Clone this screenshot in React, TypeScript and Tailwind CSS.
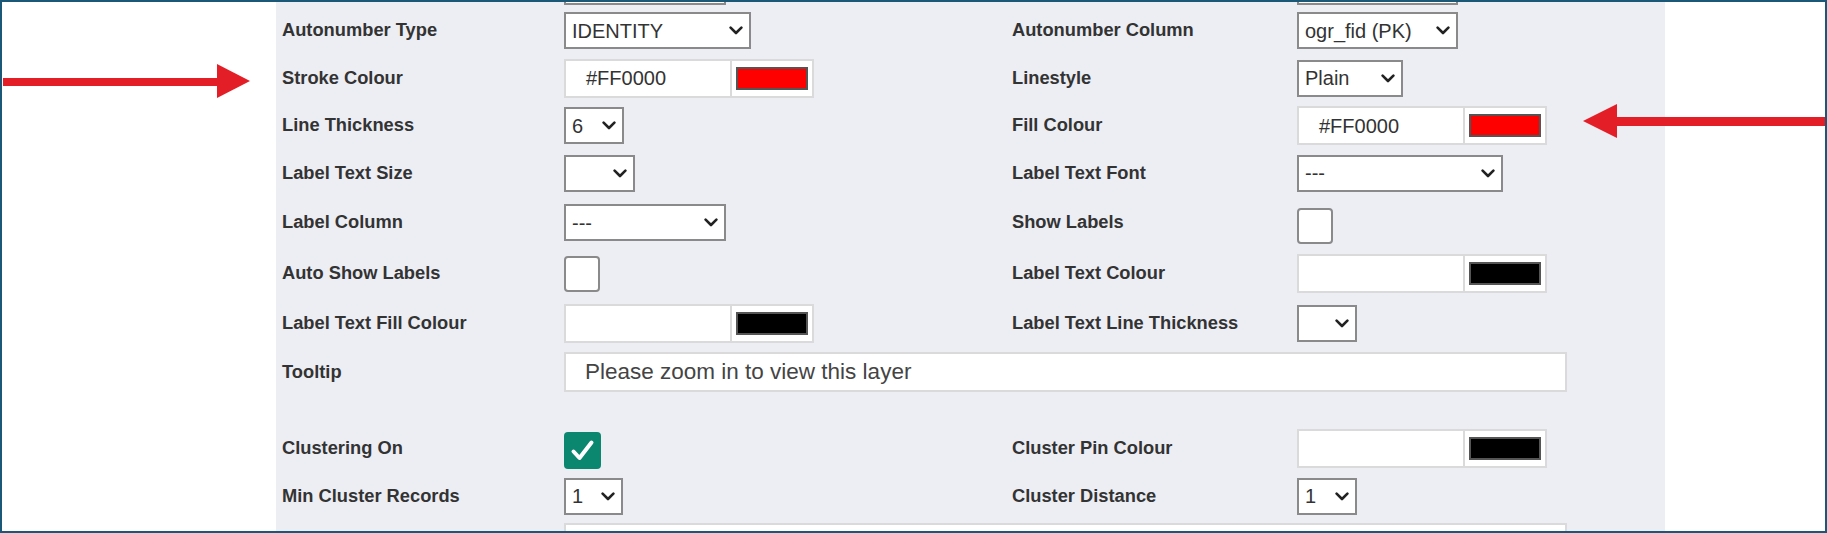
import React from "react";

const Chevron = () => (
  <svg width="14" height="9" viewBox="0 0 14 9" className="shrink-0">
    <polyline
      points="1.6,1.6 7,7 12.4,1.6"
      fill="none"
      stroke="#222"
      strokeWidth="2.6"
      strokeLinecap="round"
      strokeLinejoin="round"
    />
  </svg>
);

function Select({ w, value }: { w: string; value?: string }) {
  return (
    <div
      className={`${w} flex h-[37px] items-center justify-between border-2 border-[#8a8a8a] bg-white pl-[6px] pr-[6px] text-[20px] leading-none text-[#333]`}
    >
      <span>{value ?? ""}</span>
      <Chevron />
    </div>
  );
}

function Colour({ value, swatch }: { value?: string; swatch: string }) {
  return (
    <div className="flex h-[39px] w-[250px]">
      <div className="flex h-full w-[168px] items-center border-2 border-[#dadada] bg-white pl-[20px] text-[20px] leading-none text-[#333]">
        {value ?? ""}
      </div>
      <div className="flex h-full w-[82px] items-center justify-center border-2 border-l-0 border-[#dadada] bg-white">
        <div className={`h-[23px] w-[72px] border-2 border-[#555] ${swatch}`} />
      </div>
    </div>
  );
}

const Checkbox = () => (
  <div className="h-[36px] w-[36px] rounded-[4px] border-2 border-[#8a8a8a] bg-white" />
);

const CheckedBox = () => (
  <div className="flex h-[37px] w-[37px] items-center justify-center rounded-[4px] bg-[#0b8770]">
    <svg width="37" height="37" viewBox="0 0 37 37">
      <path
        d="M9.5 19.5 L15.5 26 L27.5 10.5"
        fill="none"
        stroke="#fff"
        strokeWidth="4"
        strokeLinecap="round"
        strokeLinejoin="round"
      />
    </svg>
  </div>
);

const Label = ({ children }: { children: React.ReactNode }) => (
  <div className="whitespace-nowrap text-[18.3px] font-bold leading-none text-[#333]">{children}</div>
);

function Row({ h, children }: { h: string; children: React.ReactNode }) {
  return (
    <div className={`grid shrink-0 grid-cols-[282px_448px_285px_1fr] items-center ${h}`}>{children}</div>
  );
}

export default function App() {
  return (
    <div className="relative h-[533px] w-[1827px] overflow-hidden border-2 border-[#1b5877] bg-white font-['Liberation_Sans',Arial,sans-serif]">
      <div className="flex h-full w-full">
        <div className="h-full w-[274px] shrink-0 bg-white" />
        <div className="flex h-full w-[1389px] shrink-0 flex-col overflow-hidden bg-[#eceef3] pl-[6px]">
          {/* partially visible previous row */}
          <div className="grid h-[5px] shrink-0 grid-cols-[282px_448px_285px_1fr] items-start">
            <div />
            <div className="h-[3px] w-[162px] border-x-2 border-b-2 border-[#8a8a8a] bg-white" />
            <div />
            <div className="h-[3px] w-[161px] border-x-2 border-b-2 border-[#8a8a8a] bg-white" />
          </div>

          <Row h="h-[47px]">
            <Label>Autonumber Type</Label>
            <Select w="w-[187px]" value="IDENTITY" />
            <Label>Autonumber Column</Label>
            <Select w="w-[161px]" value="ogr_fid (PK)" />
          </Row>

          <Row h="h-[48px]">
            <Label>Stroke Colour</Label>
            <Colour value="#FF0000" swatch="bg-[#ff0000]" />
            <Label>Linestyle</Label>
            <Select w="w-[106px]" value="Plain" />
          </Row>

          <Row h="h-[47px]">
            <Label>Line Thickness</Label>
            <Select w="w-[60px]" value="6" />
            <Label>Fill Colour</Label>
            <Colour value="#FF0000" swatch="bg-[#ff0000]" />
          </Row>

          <Row h="h-[48px]">
            <Label>Label Text Size</Label>
            <Select w="w-[71px]" />
            <Label>Label Text Font</Label>
            <Select w="w-[206px]" value="---" />
          </Row>

          <Row h="h-[51px]">
            <Label>Label Column</Label>
            <Select w="w-[162px]" value="---" />
            <Label>Show Labels</Label>
            <div className="mt-[6px]">
              <Checkbox />
            </div>
          </Row>

          <Row h="h-[50px]">
            <Label>Auto Show Labels</Label>
            <div className="mt-[2px]">
              <Checkbox />
            </div>
            <Label>Label Text Colour</Label>
            <Colour swatch="bg-black" />
          </Row>

          <Row h="h-[50px]">
            <Label>Label Text Fill Colour</Label>
            <Colour swatch="bg-black" />
            <Label>Label Text Line Thickness</Label>
            <Select w="w-[60px]" />
          </Row>

          <Row h="h-[48px]">
            <Label>Tooltip</Label>
            <div className="col-span-3 flex h-[40px] w-[1003px] items-center border-2 border-[#dadada] bg-white pl-[19px] text-[22.5px] leading-none text-[#444]">
              Please zoom in to view this layer
            </div>
          </Row>

          <div className="h-[28px] shrink-0" />

          <Row h="h-[48px]">
            <Label>Clustering On</Label>
            <div className="mt-[5px]">
              <CheckedBox />
            </div>
            <Label>Cluster Pin Colour</Label>
            <Colour swatch="bg-black" />
          </Row>

          <Row h="h-[48px]">
            <Label>Min Cluster Records</Label>
            <Select w="w-[59px]" value="1" />
            <Label>Cluster Distance</Label>
            <Select w="w-[60px]" value="1" />
          </Row>

          <div className="grid shrink-0 grid-cols-[282px_448px_285px_1fr] pt-[3px]">
            <div />
            <div className="col-span-3 h-[40px] w-[1003px] border-2 border-[#dadada] bg-white" />
          </div>
        </div>
        <div className="h-full flex-1 bg-white" />
      </div>

      {/* annotation arrows */}
      <svg className="absolute left-[1px] top-[62px]" width="250" height="34" viewBox="0 0 250 34">
        <rect x="0" y="14" width="216" height="8" fill="#e41e26" />
        <polygon points="214,0 247,17 214,34" fill="#e41e26" />
      </svg>
      <svg className="absolute left-[1581px] top-[102px]" width="242" height="34" viewBox="0 0 242 34">
        <polygon points="0,17 34,0 34,34" fill="#e41e26" />
        <rect x="32" y="13" width="210" height="9" fill="#e41e26" />
      </svg>
    </div>
  );
}
